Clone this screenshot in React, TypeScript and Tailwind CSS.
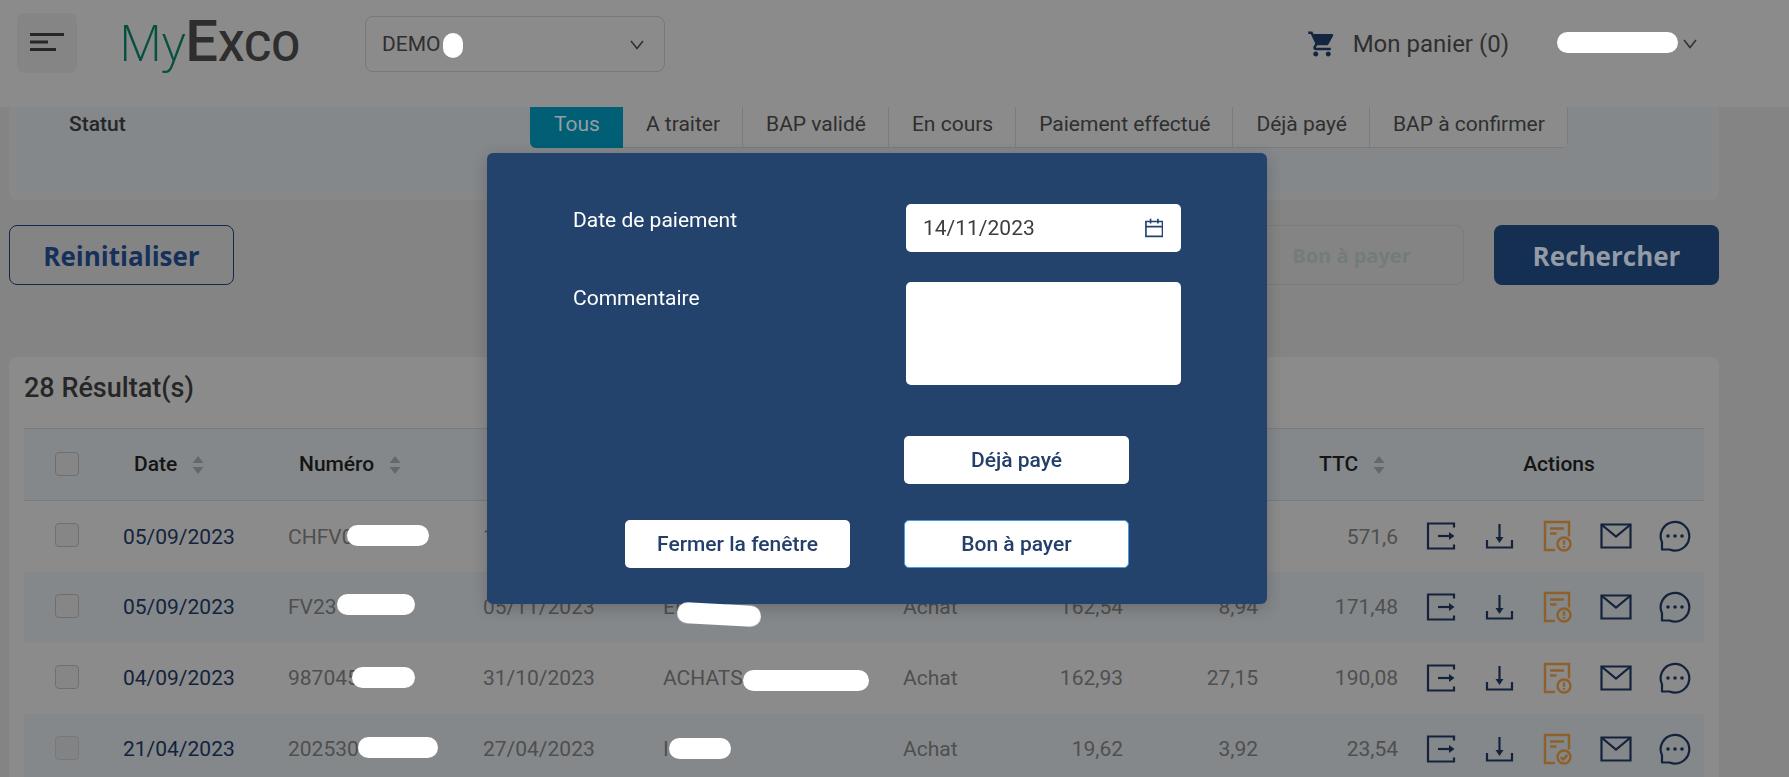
import { useState } from 'react'
import { MdShoppingCart } from 'react-icons/md'

type Invoice = {
  date: string
  number: string
  numberMask: string
  dueDate: string
  party: string
  partyMask: string
  type: string
  ht: string
  tva: string
  ttc: string
  paid?: boolean
}

const STATUSES = ['Tous', 'A traiter', 'BAP validé', 'En cours', 'Paiement effectué', 'Déjà payé', 'BAP à confirmer']

const INVOICES: Invoice[] = [
  {
    date: '05/09/2023',
    number: 'CHFV0',
    numberMask: 'left-[74px] top-[24px] w-[82px]',
    dueDate: '15/09/2023',
    party: '',
    partyMask: 'hidden',
    type: '',
    ht: '',
    tva: '',
    ttc: '571,6',
  },
  {
    date: '05/09/2023',
    number: 'FV23107388',
    numberMask: 'left-[64px] top-[22px] w-[78px]',
    dueDate: '05/11/2023',
    party: 'ENEDIS',
    partyMask: 'left-[29px] top-[32px] w-[84px] rotate-3',
    type: 'Achat',
    ht: '162,54',
    tva: '8,94',
    ttc: '171,48',
  },
  {
    date: '04/09/2023',
    number: '987045',
    numberMask: 'left-[79px] top-[24px] w-[63px]',
    dueDate: '31/10/2023',
    party: 'ACHATS',
    partyMask: 'left-[95px] top-[27px] w-[126px]',
    type: 'Achat',
    ht: '162,93',
    tva: '27,15',
    ttc: '190,08',
  },
  {
    date: '21/04/2023',
    number: '202530',
    numberMask: 'left-[85px] top-[23px] w-[80px]',
    dueDate: '27/04/2023',
    party: 'I',
    partyMask: 'left-[21px] top-[24px] w-[62px]',
    type: 'Achat',
    ht: '19,62',
    tva: '3,92',
    ttc: '23,54',
    paid: true,
  },
]

function Chevron() {
  return (
    <svg className="h-[10px] w-[14px] shrink-0" viewBox="0 0 14 10" fill="none" stroke="#2f2f2f" strokeWidth="1.5">
      <path d="M1 1l6 7.5L13 1" />
    </svg>
  )
}

function SortIcon() {
  return (
    <svg className="h-[18px] w-[12px]" viewBox="0 0 12 18" fill="#666868">
      <path d="M6 0l5.500 7h-11zM6 18l5.500-7h-11z" />
    </svg>
  )
}

function ExportIcon() {
  return (
    <svg className="h-8 w-8" viewBox="0 0 32 32" fill="none" stroke="currentColor" strokeWidth="2.200">
      <path d="M30 7.500V3.500H4v25h26v-4" />
      <path d="M14 16h13" />
      <path d="M25 12l5.500 4-5.500 4z" fill="currentColor" stroke="none" />
    </svg>
  )
}

function DownloadIcon() {
  return (
    <svg className="h-8 w-8" viewBox="0 0 32 32" fill="none" stroke="currentColor" strokeWidth="2.200">
      <path d="M4 20v7.500h25V20" />
      <path d="M16.500 4v15" />
      <path d="M12.500 17h8l-4 6z" fill="currentColor" stroke="none" />
    </svg>
  )
}

function BillIcon({ paid }: { paid?: boolean }) {
  return (
    <svg className="h-8 w-8" viewBox="0 0 32 32" fill="none" stroke="#8e602a" strokeWidth="2.400">
      <path d="M13 30H3V2h24v14.500" />
      <path d="M8 8.500h14M8 13.500h6.500" />
      <circle cx="22" cy="24" r="6.500" />
      {paid ? (
        <path d="M18.800 24.200l2.400 2.300 4.200-4.600" />
      ) : (
        <path d="M22 20.300v4.400M22 26v1.800" />
      )}
    </svg>
  )
}

function MailIcon() {
  return (
    <svg className="h-8 w-8" viewBox="0 0 32 32" fill="none" stroke="currentColor" strokeWidth="2.200">
      <path d="M1.500 4.500h29v23h-29z" />
      <path d="M2 5l14 11.500L30 5" />
    </svg>
  )
}

function ChatIcon() {
  return (
    <svg className="h-8 w-8" viewBox="0 0 32 32" fill="none" stroke="currentColor" strokeWidth="2.200">
      <path d="M3 29.500v-7.200A14.300 14.300 0 1 1 10.500 29.500z" strokeLinejoin="round" />
      <g fill="currentColor" stroke="none">
        <circle cx="9" cy="16" r="1.800" />
        <circle cx="16" cy="16" r="1.800" />
        <circle cx="23" cy="16" r="1.800" />
      </g>
    </svg>
  )
}

function CalendarIcon() {
  return (
    <svg className="pointer-events-none h-[20px] w-[20px]" viewBox="0 0 20 20" fill="none" stroke="#24436c" strokeWidth="1.800">
      <path d="M1 3h18v16H1zM1 8.500h18M6 0v5M14 0v5" />
    </svg>
  )
}

// White marker strokes hiding customer data
function Mask({ className }: { className: string }) {
  return <span className={`absolute z-30 h-[21px] rounded-full bg-white ${className}`} />
}

function Header() {
  return (
    <header className="relative z-10 flex h-[107px] shrink-0 items-start bg-[#8b8b8b] pt-[13px] pr-[92px] pl-[17px]">
      <button aria-label="Menu" className="flex h-[60px] w-[60px] items-center justify-center rounded-lg bg-[#858585]">
        <svg className="h-[24px] w-[34px]" viewBox="0 0 34 24" fill="#262626">
          <path d="M0 2h34v3H0zM0 9.500h18v3H0zM0 17h26v3H0z" />
        </svg>
      </button>
      <a href="#" className="ml-[42px] flex h-[60px] w-[182px] items-baseline leading-none">
        <span className="font-['Open_Sans'] text-[50px] leading-[56px] font-light text-[#07503f]">My</span>
        <span className="text-[58px] leading-[56px] font-medium text-[#2e2e2e]">E</span>
        <span className="text-[42px] leading-[56px] font-medium text-[#2e2e2e]">XCO</span>
      </a>
      <button className="relative mt-[3px] ml-[64px] flex h-[56px] w-[300px] items-center justify-between rounded-lg border border-[#787878] pt-[2px] pr-5 pl-4 text-[21px] text-[#2f2f2f]">
        DEMO
        <span className="absolute top-[16px] left-[77px] h-[25px] w-[20px] rounded-full bg-white" />
        <Chevron />
      </button>
      <div className="ml-auto flex h-[60px] items-center pt-[2px] text-[24px] text-[#2f2f2f]">
        <MdShoppingCart className="h-[30px] w-[30px] text-[#13253f]" />
        <span className="ml-[16px]">Mon panier (0)</span>
        <button className="relative ml-[48px] flex w-[140px] items-center justify-between pl-5 text-[22px]">
          Alain M.
          <Mask className="top-[4px] left-0 w-[121px]" />
          <Chevron />
        </button>
      </div>
    </header>
  )
}

function Filters() {
  const [status, setStatus] = useState('Tous')
  return (
    <section className="-mt-[7px] flex h-[100px] shrink-0 items-start rounded-b-lg border-x-8 border-b-8 border-[#878889] bg-[#84888a] pl-[52px] text-[21px] text-[#262626]">
      <h2 className="w-[461px] leading-[48px] font-medium">Statut</h2>
      <div className="flex h-[48px] overflow-hidden rounded-b-md">
        {STATUSES.map((s) => (
          <button
            key={s}
            onClick={() => setStatus(s)}
            className={
              s === status
                ? 'bg-[#005e75] pt-[2px] pr-[23px] pl-[24px] text-[#939fa3]'
                : 'border-r border-b border-[#7a7b7c] bg-[#8b8b8b] pt-[2px] pr-[22px] pl-[23px] text-[#2f2f2f]'
            }
          >
            {s}
          </button>
        ))}
      </div>
    </section>
  )
}

function Toolbar() {
  return (
    <div className="mt-[25px] flex h-[60px] shrink-0 font-['Open_Sans'] text-[26px] font-bold">
      <button className="w-[225px] rounded-lg border border-[#13294b] pt-[2px] text-[#15305a]">Reinitialiser</button>
      <button disabled className="ml-auto w-[225px] rounded-lg border border-[#7b7b7b] pt-[2px] text-[20px] text-[#737c7b]">
        Bon à payer
      </button>
      <button className="ml-[30px] w-[225px] rounded-lg bg-[#142f51] pt-[2px] text-[#929ba6]">Rechercher</button>
    </div>
  )
}

const CHECKBOX = 'block h-[24px] w-[24px] appearance-none rounded-[4px] border border-[#6f6f6f] bg-[#868686]'

function SortHead({ label, className }: { label: string; className: string }) {
  return (
    <th className={className}>
      <span className="flex items-center gap-[15px]">
        {label}
        <SortIcon />
      </span>
    </th>
  )
}

function Results() {
  return (
    <section className="mt-[72px] rounded-t-lg bg-[#8b8b8b] px-[15px]">
      <h1 className="pt-[14px] text-[27px] leading-[34px] font-medium text-[#262626]">28 Résultat(s)</h1>
      <table className="mt-[23px] w-full table-fixed text-[21px] text-[#4f4f4f]">
        <colgroup>
          <col className="w-[84px]" />
          <col className="w-[165px]" />
          <col className="w-[195px]" />
          <col className="w-[180px]" />
          <col className="w-[240px]" />
          <col className="w-[115px]" />
          <col className="w-[136px]" />
          <col className="w-[135px]" />
          <col className="w-[140px]" />
          <col className="w-[290px]" />
        </colgroup>
        <thead>
          <tr className="h-[72px] border-y border-[#787a7b] bg-[#84888a] text-left text-[#141414] [&>th]:font-medium">
            <th className="pb-[2px] pl-[31px]">
              <input type="checkbox" aria-label="Tout sélectionner" className={CHECKBOX} />
            </th>
            <SortHead label="Date" className="pl-[26px]" />
            <SortHead label="Numéro" className="pl-[26px]" />
            <th aria-label="Échéance" />
            <th aria-label="Tiers" />
            <th aria-label="Type" />
            <th aria-label="HT" />
            <th aria-label="TVA" />
            <SortHead label="TTC" className="pl-[45px]" />
            <th className="text-center">Actions</th>
          </tr>
        </thead>
        <tbody>
          {INVOICES.map((inv) => (
            <tr key={inv.number} className="h-[71px] even:bg-[#84888a] [&>td]:pt-[2px]">
              <td className="pb-[4px] pl-[31px]">
                <input
                  type="checkbox"
                  aria-label={`Sélectionner ${inv.number}`}
                  disabled={inv.paid}
                  className={`${CHECKBOX} disabled:border-[#787878] disabled:bg-[#818384]`}
                />
              </td>
              <td className="pl-[15px]">
                <a href="#" className="text-[#13233d]">{inv.date}</a>
              </td>
              <td className="relative pl-[15px]">
                {inv.number}
                <Mask className={inv.numberMask} />
              </td>
              <td className="pl-[15px]">{inv.dueDate}</td>
              <td className="relative pl-[15px]">
                {inv.party}
                <Mask className={inv.partyMask} />
              </td>
              <td className="pl-[15px]">{inv.type}</td>
              <td className="pr-4 text-right">{inv.ht}</td>
              <td className="pr-4 text-right">{inv.tva}</td>
              <td className="pr-4 text-right">{inv.ttc}</td>
              <td className="pb-[2px]">
                <div className="flex justify-between pr-[13px] pl-[10px] text-[#14233c]">
                  <button aria-label="Exporter"><ExportIcon /></button>
                  <button aria-label="Télécharger"><DownloadIcon /></button>
                  <button aria-label="Bon à payer"><BillIcon paid={inv.paid} /></button>
                  <button aria-label="Envoyer par mail"><MailIcon /></button>
                  <button aria-label="Commentaires"><ChatIcon /></button>
                </div>
              </td>
            </tr>
          ))}
        </tbody>
      </table>
    </section>
  )
}

function PaymentDialog() {
  const [date, setDate] = useState('14/11/2023')
  const [comment, setComment] = useState('')

  return (
    <div className="fixed inset-0 z-20 flex items-start justify-center pt-[153px] pr-[35px]">
      <div
        role="dialog"
        aria-label="Bon à payer"
        className="w-[780px] rounded-md bg-[#24436c] px-[86px] pt-[51px] pb-[36px] text-[21px] text-white shadow-[0_4px_16px_rgba(0,0,0,0.2)]"
      >
        <div className="flex items-start justify-between">
          <label htmlFor="payment-date" className="leading-[32px]">Date de paiement</label>
          <div className="flex h-[48px] w-[275px] items-center rounded-[5px] bg-white pr-[18px] pl-[17px]">
            <input
              id="payment-date"
              value={date}
              onChange={(e) => setDate(e.target.value)}
              className="w-full min-w-0 pt-[2px] text-[#3d3d3d] outline-none"
            />
            <CalendarIcon />
          </div>
        </div>
        <div className="mt-[30px] flex items-start justify-between">
          <label htmlFor="payment-comment" className="leading-[32px]">Commentaire</label>
          <textarea
            id="payment-comment"
            value={comment}
            onChange={(e) => setComment(e.target.value)}
            className="h-[103px] w-[275px] resize-none rounded-[5px] bg-white p-3 text-[#3d3d3d] outline-none"
          />
        </div>
        <div className="mt-[51px] mr-[52px] grid grid-cols-[225px_225px] justify-end gap-x-[54px] gap-y-[36px] font-medium text-[#24406a]">
          <button className="col-start-2 h-[48px] rounded-[5px] bg-white pt-[2px]">Déjà payé</button>
          <button className="h-[48px] rounded-[5px] bg-white pt-[2px]">Fermer la fenêtre</button>
          <button className="h-[48px] rounded-[5px] border border-[#4a9be0] bg-white pt-[2px]">Bon à payer</button>
        </div>
      </div>
    </div>
  )
}

export default function App() {
  return (
    <div className="flex h-screen flex-col overflow-hidden bg-[#848484] font-[Roboto,sans-serif]">
      <Header />
      <main className="flex flex-col pr-[70px] pl-[9px]">
        <Filters />
        <Toolbar />
        <Results />
      </main>
      <PaymentDialog />
    </div>
  )
}
